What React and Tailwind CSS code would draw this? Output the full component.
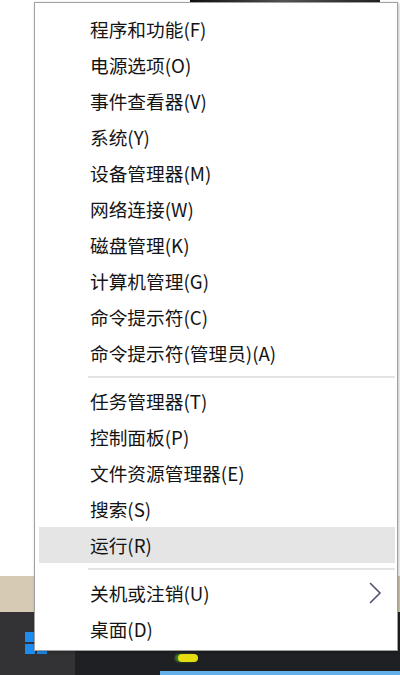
import React from 'react';

const groups = [
  [
    '程序和功能(F)',
    '电源选项(O)',
    '事件查看器(V)',
    '系统(Y)',
    '设备管理器(M)',
    '网络连接(W)',
    '磁盘管理(K)',
    '计算机管理(G)',
    '命令提示符(C)',
    '命令提示符(管理员)(A)',
  ],
  ['任务管理器(T)', '控制面板(P)', '文件资源管理器(E)', '搜索(S)', '运行(R)'],
  ['关机或注销(U)', '桌面(D)'],
];

const MenuItem = ({ label, active, submenu }) => (
  <div
    className={`flex items-center h-9 pl-[51px] pr-[12px] ${active ? 'bg-[#e5e5e5]' : ''}`}
  >
    <span className="flex-1 text-[18.7px] leading-none text-[#141414]">{label}</span>
    {submenu && (
      <svg width="14" height="22" viewBox="0 0 14 22" className="mr-[1px]">
        <polyline points="2,1 12,11 2,21" fill="none" stroke="#5b4f6e" strokeWidth="1.6" />
      </svg>
    )}
  </div>
);

const Separator = () => (
  <div className="py-[5px] pl-[49px]">
    <div className="h-[2px] bg-[#e3e3e3]" />
  </div>
);

export default function App() {
  return (
    <div
      className="relative w-[400px] h-[675px] overflow-hidden bg-white"
      style={{ fontFamily: '"Noto Sans CJK SC", "Noto Sans", sans-serif' }}
    >
      {/* desktop behind the menu */}
      <div className="h-[576px] bg-white">
        <div className="ml-[190px] w-[190px] h-[2px] bg-gradient-to-r from-[#111] via-[#555] to-[#222]" />
      </div>
      <div className="h-[36px] bg-[#d6cab4]" />
      <div className="flex h-[63px]">
        <div className="w-[75px] bg-[#333335] pt-[20px] pl-[25px]">
          <div className="grid grid-cols-2 gap-[2px] w-[22px]">
            <div className="h-[10px] bg-[#1c8cf0]" />
            <div className="h-[10px] bg-[#1c8cf0]" />
            <div className="h-[10px] bg-[#1c8cf0]" />
            <div className="h-[10px] bg-[#1c8cf0]" />
          </div>
        </div>
        <div className="flex-1 flex flex-col bg-[#1f2023]">
          <div className="flex-1 pl-[103px] pt-[42px]">
            <div className="w-[20px] h-[8px] rounded-full bg-[#e6dc12] shadow-[-3px_0_2px_#3a7a2a]" />
          </div>
          <div className="ml-[85px] h-[4px] bg-[#63b0ea]" />
        </div>
      </div>

      {/* Win+X menu */}
      <div className="absolute left-[34px] top-[2px] w-[364px] bg-white border border-[#a0a0a0] pt-[8px] pb-[3px] pl-[4px] pr-[2px] shadow-[1px_1px_3px_rgba(0,0,0,0.25)]">
        {groups.map((group, gi) => (
          <React.Fragment key={gi}>
            {gi > 0 && <Separator />}
            {group.map((label) => (
              <MenuItem
                key={label}
                label={label}
                active={label === '运行(R)'}
                submenu={label === '关机或注销(U)'}
              />
            ))}
          </React.Fragment>
        ))}
      </div>
    </div>
  );
}
